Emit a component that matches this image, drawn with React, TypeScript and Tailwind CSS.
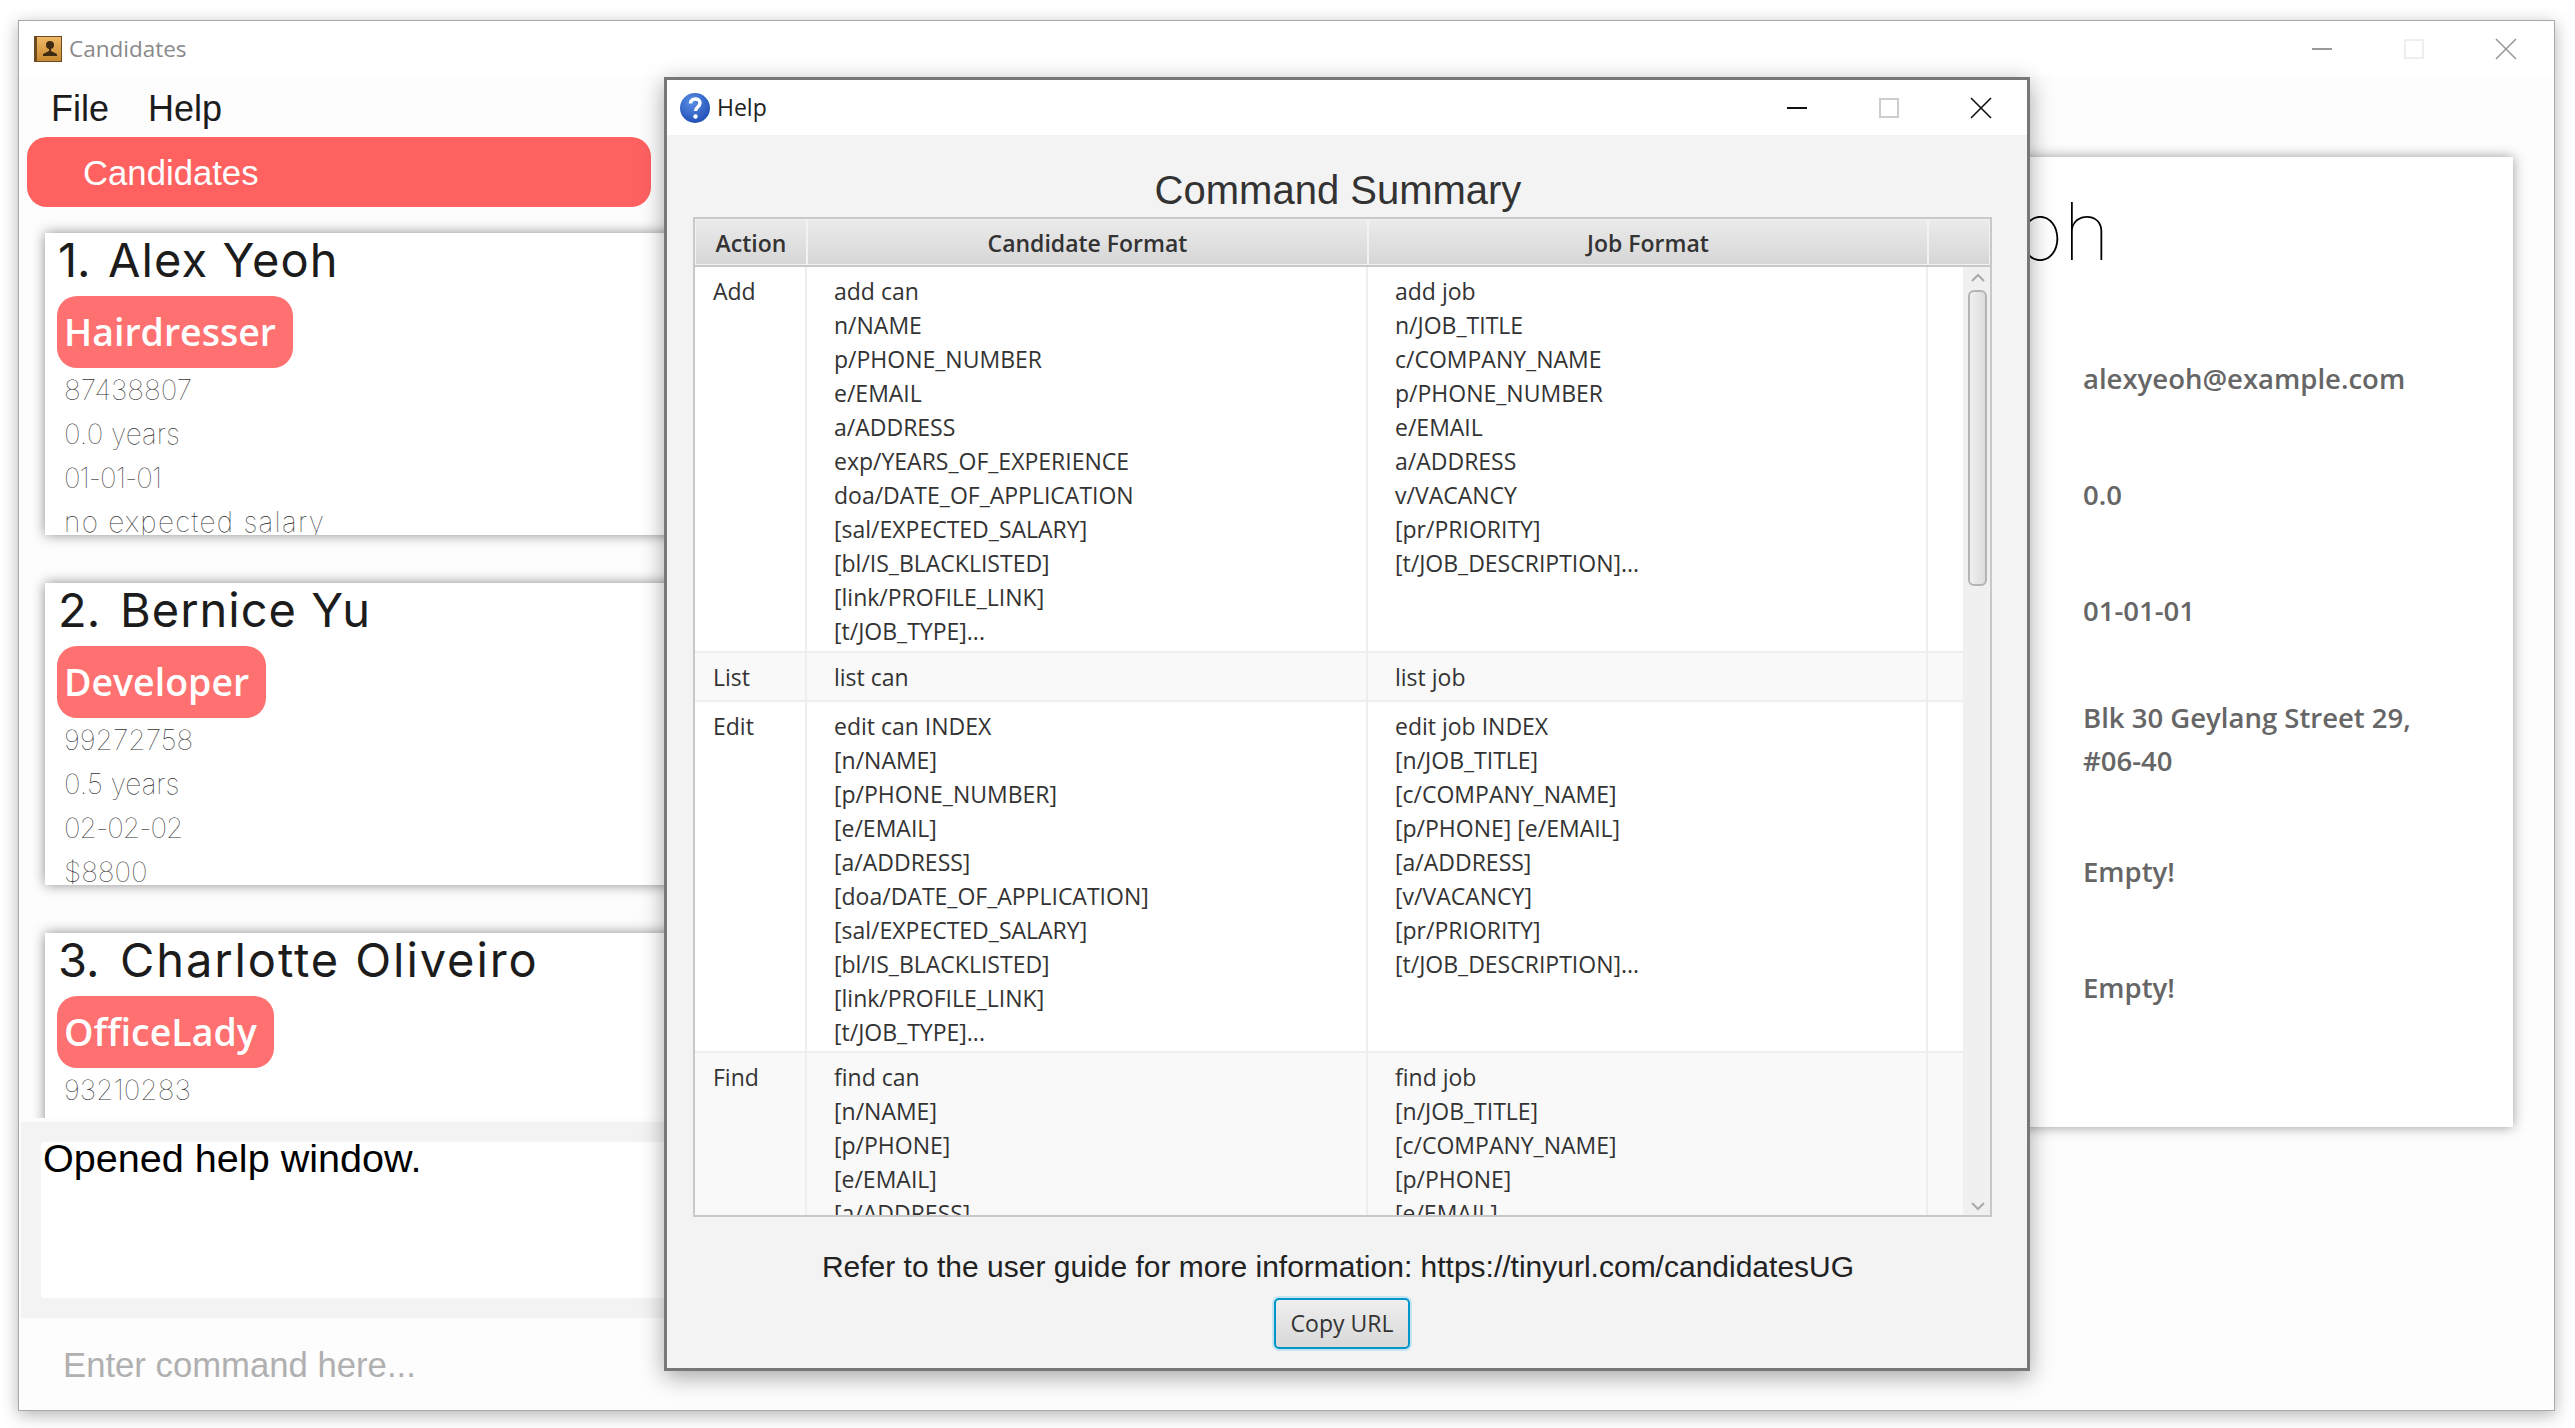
import React from 'react';

const candidates = [
  { num: '1.', numClass: 'w-[50px]', name: 'Alex Yeoh', nameClass: 'tracking-[1.1px]', tag: 'Hairdresser', details: ['87438807', '0.0 years', '01-01-01', 'no expected salary'] },
  { num: '2.', numClass: 'w-[62px]', name: 'Bernice Yu', nameClass: 'tracking-[1px]', tag: 'Developer', details: ['99272758', '0.5 years', '02-02-02', '$8800'] },
  { num: '3.', numClass: 'w-[62px]', name: 'Charlotte Oliveiro', nameClass: 'tracking-[1.9px]', tag: 'OfficeLady', details: ['93210283'] },
];

const commands = [
  {
    action: 'Add',
    rowClass: 'h-[386px] bg-white',
    candidate: ['add can', 'n/NAME', 'p/PHONE_NUMBER', 'e/EMAIL', 'a/ADDRESS', 'exp/YEARS_OF_EXPERIENCE', 'doa/DATE_OF_APPLICATION', '[sal/EXPECTED_SALARY]', '[bl/IS_BLACKLISTED]', '[link/PROFILE_LINK]', '[t/JOB_TYPE]...'],
    job: ['add job', 'n/JOB_TITLE', 'c/COMPANY_NAME', 'p/PHONE_NUMBER', 'e/EMAIL', 'a/ADDRESS', 'v/VACANCY', '[pr/PRIORITY]', '[t/JOB_DESCRIPTION]...'],
  },
  { action: 'List', rowClass: 'h-[49px] bg-[#f9f9f9]', candidate: ['list can'], job: ['list job'] },
  {
    action: 'Edit',
    rowClass: 'h-[351px] bg-white',
    candidate: ['edit can INDEX', '[n/NAME]', '[p/PHONE_NUMBER]', '[e/EMAIL]', '[a/ADDRESS]', '[doa/DATE_OF_APPLICATION]', '[sal/EXPECTED_SALARY]', '[bl/IS_BLACKLISTED]', '[link/PROFILE_LINK]', '[t/JOB_TYPE]...'],
    job: ['edit job INDEX', '[n/JOB_TITLE]', '[c/COMPANY_NAME]', '[p/PHONE] [e/EMAIL]', '[a/ADDRESS]', '[v/VACANCY]', '[pr/PRIORITY]', '[t/JOB_DESCRIPTION]...'],
  },
  {
    action: 'Find',
    rowClass: 'h-[351px] bg-[#f9f9f9]',
    candidate: ['find can', '[n/NAME]', '[p/PHONE]', '[e/EMAIL]', '[a/ADDRESS]'],
    job: ['find job', '[n/JOB_TITLE]', '[c/COMPANY_NAME]', '[p/PHONE]', '[e/EMAIL]'],
  },
];

const details = [
  { lines: ['alexyeoh@example.com'], className: 'mt-[76px]' },
  { lines: ['0.0'], className: 'mt-[73px]' },
  { lines: ['01-01-01'], className: 'mt-[73px]' },
  { lines: ['Blk 30 Geylang Street 29,', '#06-40'], className: 'mt-[64px]' },
  { lines: ['Empty!'], className: 'mt-[68px]' },
  { lines: ['Empty!'], className: 'mt-[73px]' },
];

const BookIcon = () => (
  <svg width="28" height="26" viewBox="0 0 28 26">
    <defs>
      <linearGradient id="bookFill" x1="0" y1="0" x2="0" y2="1">
        <stop offset="0" stopColor="#eeb866" />
        <stop offset="1" stopColor="#c98a30" />
      </linearGradient>
    </defs>
    <rect x="0" y="0" width="28" height="26" fill="#6e4a22" />
    <rect x="3" y="1" width="24" height="24" fill="url(#bookFill)" />
    <circle cx="16" cy="9" r="4" fill="#3f2a12" />
    <path d="M15 12h2v3l6 3v2H9v-2l6-3z" fill="#3f2a12" />
  </svg>
);

const HelpIcon = () => (
  <svg width="30" height="30" viewBox="0 0 30 30">
    <defs>
      <radialGradient id="helpFill" cx="0.4" cy="0.3" r="0.8">
        <stop offset="0" stopColor="#5b8fe6" />
        <stop offset="1" stopColor="#1a48b0" />
      </radialGradient>
    </defs>
    <circle cx="15" cy="15" r="15" fill="url(#helpFill)" />
    <path d="M10.5 10.5c0-6 9.5-6 9.5-.5 0 4-4.5 4-4.5 8" fill="none" stroke="#fff" strokeWidth="3.4" />
    <circle cx="15.5" cy="23.5" r="2.2" fill="#fff" />
  </svg>
);

const WindowControls = ({ line, faint, className }: { line: string; faint: string; className: string }) => (
  <div className={`flex ${className}`}>
    <div className="flex h-[22px] w-[92px] items-center justify-center">
      <svg width="22" height="22" viewBox="0 0 22 22"><path d="M1 11h20" stroke={line} strokeWidth="2" /></svg>
    </div>
    <div className="flex h-[22px] w-[92px] items-center justify-center">
      <svg width="20" height="20" viewBox="0 0 20 20"><rect x="1" y="1" width="18" height="18" fill="none" stroke={faint} strokeWidth="2" /></svg>
    </div>
    <div className="flex h-[22px] w-[92px] items-center justify-center">
      <svg width="22" height="22" viewBox="0 0 22 22"><path d="M1 1l20 20M21 1L1 21" stroke={line} strokeWidth="1.6" /></svg>
    </div>
  </div>
);

const HeaderCell = ({ label, className }: { label: string; className: string }) => (
  <div className={`flex items-center justify-center border border-[#f2f2f2] bg-gradient-to-b from-[#ebebeb] to-[#d6d6d6] pt-[2px] text-[23px] font-semibold text-[#333] ${className}`}>
    {label}
  </div>
);

const detailClass = (line: string) => {
  if (line.startsWith('no ')) return 'tracking-[1.3px]';
  if (/^\d\d-/.test(line)) return 'tracking-[-1px]';
  return '';
};

const CandidateCard = ({ num, numClass, name, nameClass, tag, lines }: { num: string; numClass: string; name: string; nameClass: string; tag: string; lines: string[] }) => (
  <div className="h-[302px] w-[640px] shrink-0 overflow-hidden bg-white pl-[12px] shadow-[0_0_12px_rgba(0,0,0,0.45)]">
    <div className="ml-[1px] flex h-[63px] font-['Inter',sans-serif] text-[47px] leading-[54px] text-[#1c1c1c]">
      <span className={numClass}>{num}</span>
      <span className={nameClass}>{name}</span>
    </div>
    <div className="flex h-[72px] w-fit items-center rounded-[20px] bg-[#ff7070] pl-[7px] pr-[17px] font-['Open_Sans',sans-serif] text-[37.5px] font-semibold text-white">
      {tag}
    </div>
    <div className="ml-[7px] font-['Inter',sans-serif] text-[28px] font-thin leading-[44px] text-[#333]">
      {lines.map((line) => (
        <div key={line} className={detailClass(line)}>{line}</div>
      ))}
    </div>
  </div>
);

export default function App() {
  return (
    <div className="h-[1428px] w-[2575px] overflow-hidden bg-white pl-[18px] pt-[20px] font-['Liberation_Sans',sans-serif]">
      <div className="relative flex h-[1391px] w-[2537px] flex-col border border-[#a8a8a8] bg-[#fdfdfd] shadow-[0_4px_16px_rgba(0,0,0,0.3)]">
        <div className="flex h-[56px] shrink-0 items-center justify-between bg-white pl-[15px]">
          <div className="flex items-center gap-[7px]">
            <BookIcon />
            <span className="font-['Open_Sans',sans-serif] text-[22.5px] text-[#8a8a8a]">Candidates</span>
          </div>
          <WindowControls line="#999999" faint="#eeeeee" className="pr-[2px]" />
        </div>

        <div className="flex min-h-0 flex-1">
          <div className="flex w-[671px] shrink-0 flex-col">
            <div className="flex h-[60px] shrink-0 items-center gap-[39px] pl-[32px] pt-[3px] text-[36px] text-[#1c1c1c]">
              <span>File</span>
              <span>Help</span>
            </div>
            <div className="ml-[8px] flex h-[70px] w-[624px] shrink-0 items-center rounded-[20px] bg-[#ff6161] pl-[56px] pt-[2px] text-[34.7px] text-white">
              Candidates
            </div>
            <div className="flex h-[911px] shrink-0 flex-col gap-[48px] overflow-hidden pl-[26px] pt-[26px]">
              {candidates.map((c) => (
                <CandidateCard key={c.name} num={c.num} numClass={c.numClass} name={c.name} nameClass={c.nameClass} tag={c.tag} lines={c.details} />
              ))}
            </div>
            <div className="ml-[2px] mt-[4px] h-[196px] shrink-0 bg-[#f3f3f3] py-[20px] pl-[20px]">
              <div className="h-[156px] rounded-l-[4px] bg-white pl-[2px] text-[39.6px] leading-[32px] text-black">
                Opened help window.
              </div>
            </div>
            <div className="flex flex-1 items-center pl-[44px] pt-[3px] text-[34.7px] text-[#b0b0b0]">Enter command here...</div>
          </div>

          <div className="ml-[14px] mt-[80px] h-[970px] w-[1809px] bg-white pl-[14px] shadow-[0_0_12px_rgba(0,0,0,0.4)]">
            <div className="flex h-[124px] w-[1392px] items-end justify-end font-['Inter',sans-serif] text-[80px] font-thin leading-[100px] text-black">
              Alex Yeoh
            </div>
            <div className="pl-[1365px] font-['Open_Sans',sans-serif] text-[27.5px] font-semibold leading-[43px] text-[#666]">
              {details.map((d, i) => (
                <div key={i} className={d.className}>
                  {d.lines.map((line) => (
                    <div key={line}>{line}</div>
                  ))}
                </div>
              ))}
            </div>
          </div>
        </div>

        <div className="absolute left-[645px] top-[56px] flex h-[1294px] w-[1366px] flex-col border-[3px] border-[#777] bg-[#f3f3f3] shadow-[0_6px_22px_rgba(0,0,0,0.35)]">
          <div className="flex h-[55px] shrink-0 items-center justify-between bg-white pl-[13px]">
            <div className="flex items-center gap-[7px] font-['Open_Sans',sans-serif] text-[23px] text-[#222]">
              <HelpIcon />
              <span>Help</span>
            </div>
            <WindowControls line="#111111" faint="#cccccc" className="pr-0" />
          </div>

          <div className="flex flex-1 flex-col items-center pr-[18px]">
            <div className="h-[82px] shrink-0 pt-[32px] text-[40px] leading-[47px] text-[#333]">Command Summary</div>
            <div className="ml-[26px] flex h-[1000px] w-[1299px] shrink-0 flex-col self-start border-2 border-[#c8c8c8] bg-white font-['Open_Sans',sans-serif]">
              <div className="flex h-[48px] shrink-0 border-b-2 border-[#c8c8c8]">
                <HeaderCell label="Action" className="w-[112px]" />
                <HeaderCell label="Candidate Format" className="w-[561px]" />
                <HeaderCell label="Job Format" className="w-[560px]" />
                <HeaderCell label="" className="flex-1" />
              </div>
              <div className="relative min-h-0 flex-1 overflow-hidden">
                {commands.map((row) => (
                  <div key={row.action} className={`flex shrink-0 border-b-2 border-[#eeeeee] text-[23px] leading-[34px] text-[#333] ${row.rowClass}`}>
                    <div className="w-[112px] shrink-0 border-r-2 border-[#eeeeee] pl-[18px] pt-[7px]">{row.action}</div>
                    <div className="w-[561px] shrink-0 border-r-2 border-[#eeeeee] pl-[27px] pt-[7px]">
                      {row.candidate.map((line) => (
                        <div key={line}>{line}</div>
                      ))}
                    </div>
                    <div className="w-[560px] shrink-0 border-r-2 border-[#eeeeee] pl-[27px] pt-[7px]">
                      {row.job.map((line) => (
                        <div key={line}>{line}</div>
                      ))}
                    </div>
                  </div>
                ))}
                <div className="absolute bottom-0 right-0 top-0 flex w-[27px] flex-col items-center bg-[#f0f0f0] pl-[2px]">
                  <svg className="mt-[6px]" width="16" height="10" viewBox="0 0 16 10"><path d="M2 8l6-6 6 6" fill="none" stroke="#aaaaaa" strokeWidth="2" /></svg>
                  <div className="mt-[7px] h-[296px] w-[19px] rounded-[6px] border-2 border-[#b4b4b4] bg-gradient-to-r from-[#f0f0f0] to-[#dcdcdc]" />
                  <svg className="mb-[4px] mt-auto" width="16" height="10" viewBox="0 0 16 10"><path d="M2 2l6 6 6-6" fill="none" stroke="#aaaaaa" strokeWidth="2" /></svg>
                </div>
              </div>
            </div>
            <div className="mt-[31px] text-[30px] leading-[38px] text-[#222]">Refer to the user guide for more information: https://tinyurl.com/candidatesUG</div>
            <button className="ml-[8px] mt-[12px] h-[51px] w-[136px] rounded-[5px] border-2 border-[#0096c9] bg-gradient-to-b from-[#efefef] to-[#d8d8d8] font-['Open_Sans',sans-serif] text-[23px] text-[#333] shadow-[0_0_0_2px_#c5e5f2]">
              Copy URL
            </button>
          </div>
        </div>
      </div>
    </div>
  );
}
